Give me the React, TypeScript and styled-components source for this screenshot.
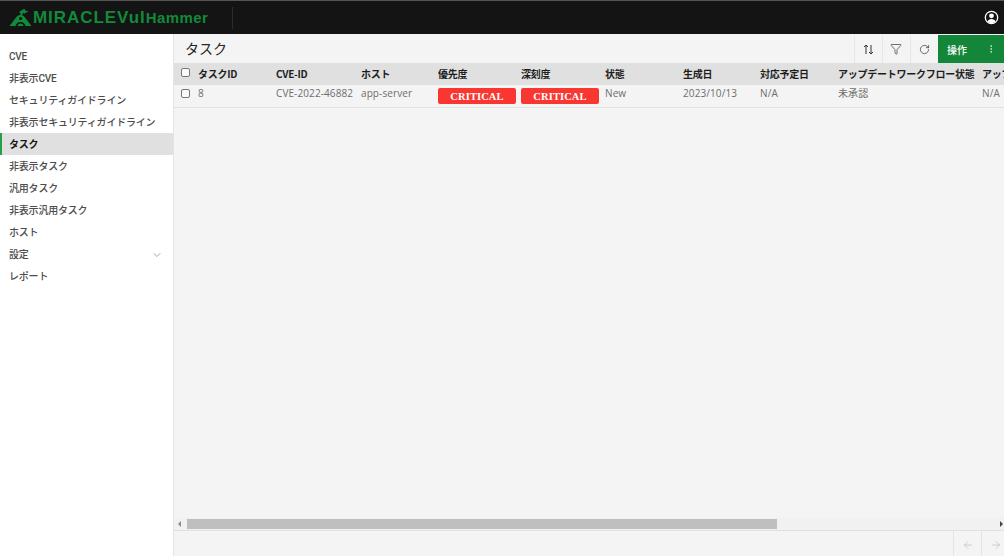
import React from "react";
import styled, { createGlobalStyle } from "styled-components";
import { ArrowLeft, ArrowRight, ChevronDown, EllipsisVertical, Filter, RotateCw } from "lucide-react";

const Global = createGlobalStyle`
  html, body { margin: 0; padding: 0; width: 1004px; height: 556px; overflow: hidden; }
  body { font-family: "Roboto", "Noto Sans CJK JP", sans-serif; background: #f4f4f4; }
  * { box-sizing: border-box; }
`;
const Page = styled.div`display: flex; flex-direction: column; width: 1004px; height: 556px; overflow: hidden;`;
const Header = styled.header`
  height: 34px; flex: none; background: #141414; border-top: 1px solid #555;
  display: flex; align-items: center; padding: 0 5px 0 8px;
`;
const Logo = styled.div`display: flex; align-items: center; gap: 0; width: 225px; height: 22px; border-right: 1px solid #2c2c2c;`;
const LogoText = styled.span`
  font-family: "Liberation Sans", sans-serif; font-weight: 700; color: #118a3a; white-space: nowrap;
  font-size: 17px; letter-spacing: .95px; line-height: 20px;
`;
const LogoSmall = styled.span`font-size: 15px; letter-spacing: .4px; font-weight: 700;`;
const UserButton = styled.div`margin-left: auto; display: flex; color: #fff;`;
const Body = styled.div`flex: 1; display: flex; min-height: 0;`;
const Sidebar = styled.nav`
  width: 174px; flex: none; background: #fff; border-right: 1px solid #e4e4e4; padding-top: 11px;
`;
const NavItem = styled.div<{ $active?: boolean }>`
  height: 22px; display: flex; align-items: center; justify-content: space-between;
  padding: 1px 10px 0 ${p => (p.$active ? 7 : 9)}px;
  font-size: 10px; line-height: 21px; white-space: nowrap; letter-spacing: -.2px;
  color: ${p => (p.$active ? "#161616" : "#4c4c4c")};
  font-weight: ${p => (p.$active ? 700 : 500)};
  background: ${p => (p.$active ? "#e0e0e0" : "transparent")};
  border-left: ${p => (p.$active ? "2px solid #24a148" : "none")};
  svg { color: #666; }
`;
const Main = styled.main`flex: 1; min-width: 0; display: flex; flex-direction: column;`;
const TitleBar = styled.div`height: 29px; flex: none; display: flex; align-items: stretch; padding-top: 1px;`;
const Title = styled.h1`
  margin: 0 auto 0 11px; font-size: 14px; font-weight: 400; color: #262626; line-height: 28px;
`;
const ToolButton = styled.div`
  width: 27px; margin-right: 1px; display: flex; align-items: center; justify-content: center;
  border-left: 1px solid #e6e6e6; color: #333;
`;
const ActionButton = styled.div`
  width: 66px; background: #13863a; color: #fff; font-size: 10px; font-weight: 500;
  display: flex; align-items: center; justify-content: space-between; padding: 0 8px 0 9px;
`;
const TableArea = styled.div`flex: 1; min-height: 0; overflow: hidden;`;
const Row = styled.div<{ $head?: boolean }>`
  display: grid; width: 900px; height: 22px;
  grid-template-columns: 24px 78px 85px 77px 83px 84px 78px 77px 78px 144px 60px;
  align-items: ${p => (p.$head ? "center" : "start")};
`;
const RowWrap = styled.div<{ $head?: boolean }>`
  width: 830px; overflow: hidden;
  background: ${p => (p.$head ? "#e0e0e0" : "transparent")};
  border-bottom: ${p => (p.$head ? "none" : "1px solid #e2e2e2")};
`;
const HeadCell = styled.div`
  font-size: 10px; line-height: 14px; margin-top: -1px; font-weight: 700; color: #1d1d1d; white-space: nowrap;
  font-family: "Noto Sans CJK JP", "DejaVu Sans", sans-serif; letter-spacing: -.25px;
`;
const Cell = styled.div`
  font-family: "Open Sans", "Noto Sans CJK JP", sans-serif;
  font-size: 10px; line-height: 16px; color: #6d6d6d; white-space: nowrap; letter-spacing: .1px;
`;
const CheckCell = styled.div<{ $head?: boolean }>`
  padding-left: 7px; padding-top: ${p => (p.$head ? 0 : 4)}px; margin-top: ${p => (p.$head ? -3 : 0)}px;
  display: flex;
`;
const Check = styled.span`
  width: 9px; height: 9px; border: 1px solid #777; border-radius: 2px; background: #fbfbfb; display: block;
`;
const Badge = styled.span`
  display: flex; align-items: center; justify-content: center; width: 78px; height: 16px; margin-top: 3px;
  background: #fa3631; color: #fff; border-radius: 2px;
  font-family: "Liberation Serif", serif; font-weight: 700; font-size: 10.5px; letter-spacing: .1px;
`;
const ScrollBar = styled.div`
  height: 13px; flex: none; display: flex; align-items: center; background: #f1f1f1;
  border-bottom: 1px solid #e0e0e0; padding: 0 1px 0 4px;
`;
const ArrowL = styled.i`width: 0; height: 0; border: 3px solid transparent; border-left: 0; border-right: 3px solid #8a8a8a;`;
const ArrowR = styled.i`width: 0; height: 0; border: 3px solid transparent; border-right: 0; border-left: 3px solid #444; margin-left: auto;`;
const Thumb = styled.div`width: 590px; height: 10px; margin-left: 6px; background: #bfbfbf;`;
const Footer = styled.div`height: 25px; flex: none; display: flex; justify-content: flex-end; margin-right: -5px;`;
const PageButton = styled.div`
  width: 28px; display: flex; align-items: center; justify-content: center; color: #b4b4b4;
  border-left: 1px solid #e4e4e4; padding-top: 2px;
`;

const Mark = () => (
  <svg width="25" height="20" viewBox="0 0 24 20" aria-hidden="true">
    <path fill="#118a3a" fillRule="evenodd" d="M1 18 7.5 9.5C9 7.5 11 6.7 12.5 6.8L10.8 3.8 15.8.8 17 2.8 20 3.2 15.7 5.8 14.6 4.4 13.7 7.2C15.5 8 16.5 9.2 17.2 10.5L23 18H17C16.2 15.5 14.5 14 12 14S7.8 15.5 7 18ZM10.5 10.5a1.6 1.6 0 1 0 3.2 0 1.6 1.6 0 1 0-3.2 0Z" />
    <path fill="#118a3a" d="M9 18c.5-1.6 1.6-2.4 3-2.4s2.5.8 3 2.4Z" />
  </svg>
);

const UserIcon = () => (
  <svg width="15" height="15" viewBox="0 0 15 15" aria-hidden="true">
    <circle cx="7.5" cy="7.5" r="6.2" fill="none" stroke="#fff" strokeWidth="1.3" />
    <circle cx="7.5" cy="5.8" r="2.4" fill="#fff" />
    <path fill="#fff" d="M3.4 11.6c.6-1.9 2.2-2.7 4.1-2.7s3.5.8 4.1 2.7c-1 1-2.5 1.6-4.1 1.6s-3.1-.6-4.1-1.6Z" />
  </svg>
);

const SortIcon = () => (
  <svg width="11" height="11" viewBox="0 0 11 11" fill="none" stroke="currentColor" strokeWidth="1" aria-hidden="true">
    <path d="M3 10V1M1 3l2-2 2 2M8 1v9M6 8l2 2 2-2" />
  </svg>
);

const nav = ["CVE", "非表示CVE", "セキュリティガイドライン", "非表示セキュリティガイドライン", "タスク", "非表示タスク", "汎用タスク", "非表示汎用タスク", "ホスト", "設定", "レポート"];
const heads = ["タスクID", "CVE-ID", "ホスト", "優先度", "深刻度", "状態", "生成日", "対応予定日", "アップデートワークフロー状態", "アップデート"];

export default function App() {
  return (
    <Page>
      <Global />
      <Header>
        <Logo>
          <Mark />
          <LogoText>MIRACLEVul<LogoSmall>Hammer</LogoSmall></LogoText>
        </Logo>
        <UserButton><UserIcon /></UserButton>
      </Header>
      <Body>
        <Sidebar>
          {nav.map(n => (
            <NavItem key={n} $active={n === "タスク"}>
              {n}
              {n === "設定" && <ChevronDown size={12} strokeWidth={1.2} />}
            </NavItem>
          ))}
        </Sidebar>
        <Main>
          <TitleBar>
            <Title>タスク</Title>
            <ToolButton><SortIcon /></ToolButton>
            <ToolButton><Filter size={12} strokeWidth={1.4} /></ToolButton>
            <ToolButton><RotateCw size={11} strokeWidth={1.5} /></ToolButton>
            <ActionButton>操作<EllipsisVertical size={10} strokeWidth={1.5} /></ActionButton>
          </TitleBar>
          <TableArea>
            <RowWrap $head>
              <Row $head>
                <CheckCell $head><Check /></CheckCell>
                {heads.map(h => <HeadCell key={h}>{h}</HeadCell>)}
              </Row>
            </RowWrap>
            <RowWrap>
              <Row>
                <CheckCell><Check /></CheckCell>
                <Cell>8</Cell>
                <Cell>CVE-2022-46882</Cell>
                <Cell>app-server</Cell>
                <div><Badge>CRITICAL</Badge></div>
                <div><Badge>CRITICAL</Badge></div>
                <Cell>New</Cell>
                <Cell>2023/10/13</Cell>
                <Cell>N/A</Cell>
                <Cell>未承認</Cell>
                <Cell>N/A</Cell>
              </Row>
            </RowWrap>
          </TableArea>
          <ScrollBar><ArrowL /><Thumb /><ArrowR /></ScrollBar>
          <Footer>
            <PageButton><ArrowLeft size={12} strokeWidth={1.2} /></PageButton>
            <PageButton><ArrowRight size={12} strokeWidth={1.2} /></PageButton>
          </Footer>
        </Main>
      </Body>
    </Page>
  );
}
